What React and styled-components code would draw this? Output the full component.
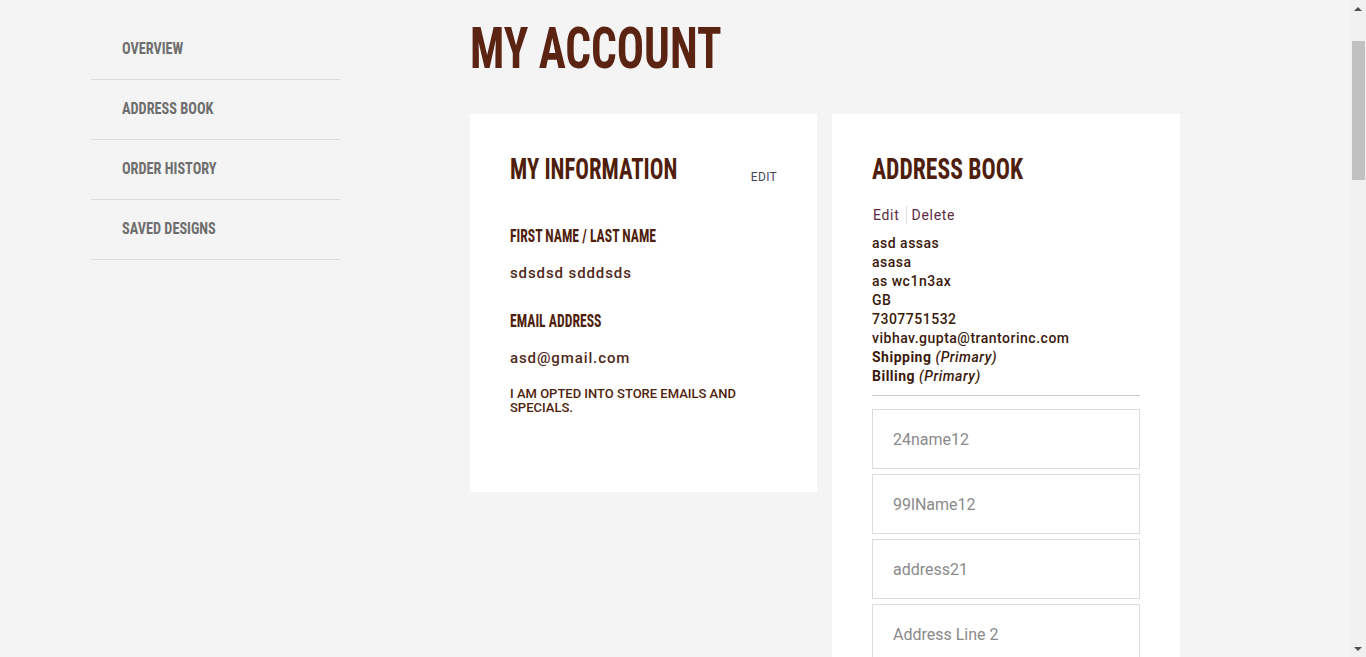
import React from "react";
import styled, { createGlobalStyle, css } from "styled-components";

const Global = createGlobalStyle`
  html, body { margin: 0; padding: 0; background: #f4f4f4; }
  body { font-family: Roboto, "Open Sans", sans-serif; }
  * { box-sizing: border-box; }
`;

const condensed = (scale) => css`
  font-family: "Roboto Condensed", "Liberation Sans Narrow", "DejaVu Sans Condensed", sans-serif;
  font-stretch: condensed;
  font-weight: 700;
  transform: scaleX(${scale});
  transform-origin: left center;
  white-space: nowrap;
`;

const Page = styled.div`
  display: grid;
  grid-template-columns: 249px 710px;
  column-gap: 130px;
  padding-left: 91px;
  padding-top: 19px;
`;

const Side = styled.nav`
  display: flex;
  flex-direction: column;
  padding-top: 1px;
`;

const SideItem = styled.a`
  display: flex;
  align-items: center;
  height: 60px;
  padding: 0 0 3px 31px;
  border-bottom: 1px solid #dcdcdc;
  text-decoration: none;
  color: #6e6e6e;
`;

const SideText = styled.span`
  ${condensed(0.84)};
  font-size: 17px;
`;

const Main = styled.main`
  display: flex;
  flex-direction: column;
`;

const Title = styled.h1`
  margin: 0;
  ${condensed(0.78)};
  font-size: 58px;
  line-height: 58px;
  color: #5a2312;
  height: 95px;
`;

const Cards = styled.div`
  display: grid;
  grid-template-columns: 347px 348px;
  column-gap: 15px;
  align-items: start;
`;

const Card = styled.section`
  background: #fff;
  padding: 37px 40px 40px;
  min-height: ${p => p.$mh || 0}px;
`;

const CardHead = styled.div`
  display: flex;
  align-items: flex-end;
  justify-content: space-between;
`;

const CardTitle = styled.h2`
  margin: 0;
  ${condensed(p => p.$scale || 0.77)};
  font-size: 29.5px;
  line-height: 36px;
  color: #4f1e0c;
`;

const EditLink = styled.a`
  font-family: Roboto, sans-serif;
  font-size: 12px;
  letter-spacing: 0.3px;
  color: #4a4658;
  margin-bottom: 3px;
`;

const Label = styled.h3`
  margin: ${p => p.$mt}px 0 0;
  ${condensed(0.76)};
  font-size: 18px;
  line-height: 22px;
  color: #4f1e0c;
`;

const Value = styled.p`
  margin: 17px 0 0;
  font-family: Roboto, sans-serif;
  font-weight: 500;
  font-size: 15px;
  letter-spacing: 0.9px;
  color: #4f2a1c;
`;

const Opt = styled.p`
  margin: 20px 0 0;
  font-family: Roboto, sans-serif;
  font-weight: 500;
  font-size: 13px;
  line-height: 14px;
  color: #4f1e0c;
`;

const Actions = styled.div`
  display: flex;
  align-items: center;
  margin-top: 19px;
  font-family: Roboto, sans-serif;
  font-size: 14px;
  letter-spacing: 0.7px;
`;

const Action = styled.a`
  color: #5c2a45;
  padding: 0 ${p => (p.$first ? 6 : 0)}px 0 ${p => (p.$first ? 1 : 5)}px;
  border-right: ${p => (p.$first ? "1px solid #e2e2e2" : "none")};
  line-height: 18px;
`;

const Address = styled.div`
  margin-top: 10px;
  padding-bottom: 9px;
  border-bottom: 1px solid #c8c8c8;
  font-family: Roboto, sans-serif;
  font-weight: 500;
  font-size: 14px;
  line-height: 19px;
  letter-spacing: 0.5px;
  color: #3b1a0c;
`;

const Line = styled.div``;

const Strong = styled.span`
  font-weight: 700;
`;

const Em = styled.em`
  font-style: italic;
  font-weight: 500;
`;

const Fields = styled.div`
  display: flex;
  flex-direction: column;
  gap: 5px;
  margin-top: 13px;
`;

const Field = styled.input`
  height: 60px;
  width: 100%;
  border: 1px solid #dcdcdc;
  padding: 0 20px;
  font-family: Roboto, sans-serif;
  font-size: 16px;
  color: #333;
  background: #fff;
  outline: none;
  &::placeholder { color: #8a8a8a; }
`;

/* fake browser scrollbar, overlaying the right edge of the window */
const ScrollTrack = styled.div`
  position: fixed;
  top: 0;
  right: 0;
  width: 17px;
  height: 100vh;
  background: #f1f1f1;
  display: flex;
  flex-direction: column;
  align-items: center;
`;

const Arrow = styled.div`
  height: 17px;
  width: 17px;
  display: flex;
  align-items: center;
  justify-content: center;
  &::before {
    content: "";
    border-left: 4px solid transparent;
    border-right: 4px solid transparent;
    ${p => (p.$down ? "border-top: 4px solid #505050;" : "border-bottom: 4px solid #505050;")}
  }
`;

const Thumb = styled.div`
  margin-top: 24px;
  width: 13px;
  margin-left: 2px;
  height: 139px;
  background: #c1c1c1;
`;

const Spacer = styled.div`
  flex: 1;
`;

const nav = ["OVERVIEW", "ADDRESS BOOK", "ORDER HISTORY", "SAVED DESIGNS"];

export default function App() {
  return (
    <>
      <Global />
      <Page>
        <Side>
          {nav.map(n => (
            <SideItem key={n} href="#"><SideText>{n}</SideText></SideItem>
          ))}
        </Side>
        <Main>
          <Title>MY ACCOUNT</Title>
          <Cards>
            <Card $mh={378}>
              <CardHead>
                <CardTitle>MY INFORMATION</CardTitle>
                <EditLink>EDIT</EditLink>
              </CardHead>
              <Label $mt={38}>FIRST NAME / LAST NAME</Label>
              <Value>sdsdsd sdddsds</Value>
              <Label $mt={28}>EMAIL ADDRESS</Label>
              <Value>asd@gmail.com</Value>
              <Opt>I AM OPTED INTO STORE EMAILS AND SPECIALS.</Opt>
            </Card>
            <Card>
              <CardTitle $scale={0.8}>ADDRESS BOOK</CardTitle>
              <Actions>
                <Action $first>Edit</Action>
                <Action>Delete</Action>
              </Actions>
              <Address>
                <Line>asd assas</Line>
                <Line>asasa</Line>
                <Line>as wc1n3ax</Line>
                <Line>GB</Line>
                <Line>7307751532</Line>
                <Line>vibhav.gupta@trantorinc.com</Line>
                <Line><Strong>Shipping</Strong> <Em>(Primary)</Em></Line>
                <Line><Strong>Billing</Strong> <Em>(Primary)</Em></Line>
              </Address>
              <Fields>
                <Field placeholder="24name12" />
                <Field placeholder="99lName12" />
                <Field placeholder="address21" />
                <Field placeholder="Address Line 2" />
                <Field placeholder="City" />
                <Field placeholder="Postcode" />
              </Fields>
            </Card>
          </Cards>
        </Main>
      </Page>
      <ScrollTrack aria-hidden="true">
        <Arrow />
        <Thumb />
        <Spacer />
        <Arrow $down />
      </ScrollTrack>
    </>
  );
}
